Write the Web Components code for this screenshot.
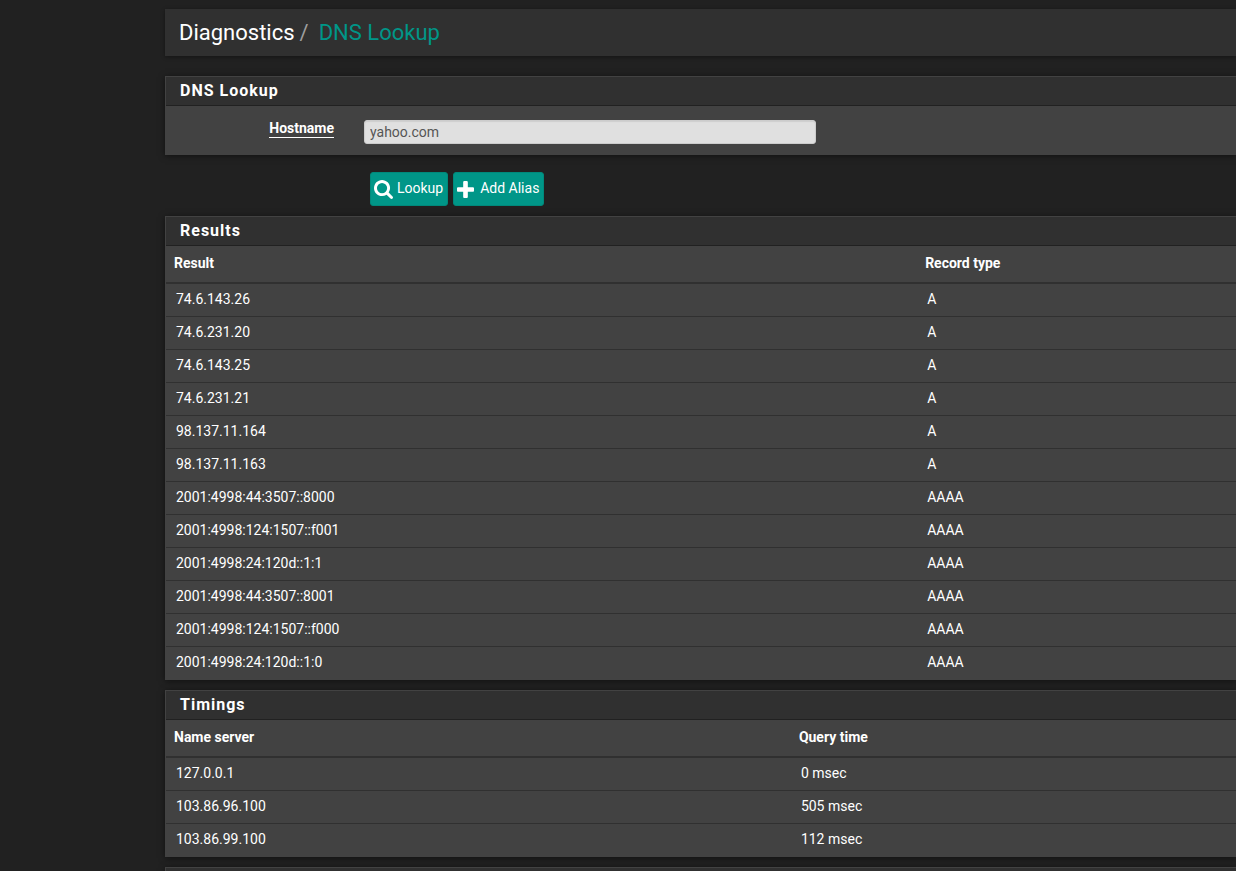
<!DOCTYPE html>
<html lang="en">
<head>
<meta charset="utf-8">
<meta name="viewport" content="width=device-width, initial-scale=1">
<title>Diagnostics: DNS Lookup</title>
<style>
  html { background: #212121; scrollbar-width: none; }
  body { margin: 0; font: 14px/20px Roboto, "Liberation Sans", sans-serif; color: #fff; }
</style>
</head>
<body>
<dns-lookup-page></dns-lookup-page>

<script>
const define = (name, html, setup) => {
  const template = document.createElement('template');
  template.innerHTML = html;
  customElements.define(name, class extends HTMLElement {
    connectedCallback() {
      if (this.shadowRoot) return;
      this.attachShadow({ mode: 'open' }).append(template.content.cloneNode(true));
      if (setup) setup(this, this.shadowRoot);
    }
  });
};

const ICONS = {
  search: ['0 0 1664 1664', 'M1152 704q0-185-131.5-316.5T704 256 387.5 387.5 256 704t131.5 316.5T704 1152t316.5-131.5T1152 704zm512 832q0 52-38 90t-90 38q-54 0-90-38l-343-342q-179 124-399 124-143 0-273.5-55.5T206 1202 55.5 977.5 0 704t55.5-273.5T206 206 430.5 55.5 704 0t273.5 55.5T1202 206t150.5 224.5T1408 704q0 220-124 399l343 343q37 37 37 90z'],
  plus: ['0 0 1408 1408', 'M1408 608v192q0 40-28 68t-68 28H896v416q0 40-28 68t-68 28H608q-40 0-68-28t-28-68V896H96q-40 0-68-28T0 800V608q0-40 28-68t68-28h416V96q0-40 28-68t68-28h192q40 0 68 28t28 68v416h416q40 0 68 28t28 68z']
};

define('bread-crumbs', `
  <style>
    :host { display: block; background: #303030; box-shadow: 0 1px 4px rgba(0,0,0,.4); }
    nav { display: flex; gap: 5px; padding: 10px 14px 9px; font-size: 22px; line-height: 28px; }
    .sep { color: #9e9e9e; }
    a { color: #009688; text-decoration: none; padding-left: 5px; }
  </style>
  <nav aria-label="Breadcrumb"><slot></slot><span class="sep">/</span><a href="#"></a></nav>`,
  (host, root) => { root.querySelector('a').textContent = host.getAttribute('current'); });

define('ui-panel', `
  <style>
    :host { display: block; background: #424242; border: 1px solid #424242; border-right: 0; box-shadow: 0 1px 6px rgba(0,0,0,.5); }
    h2 { margin: 0; padding: 0 14px; height: 28px; background: #303030; border-bottom: 1px solid #212121;
         font-size: 16px; line-height: 28px; font-weight: 700; letter-spacing: 1px; }
  </style>
  <h2></h2><slot></slot>`,
  (host, root) => { root.querySelector('h2').textContent = host.getAttribute('heading') || ''; });

define('host-form', `
  <style>
    :host { display: block; }
    form { display: grid; grid-template-columns: 168px minmax(0, 452px); column-gap: 30px; padding: 14px 15px 10px 0; }
    label { justify-self: end; align-self: start; font-size: 14px; line-height: 17px; font-weight: 700; border-bottom: 1px solid #fff; }
    input { box-sizing: border-box; width: 100%; height: 24px; padding: 0 5px; border: 1px solid #ccc; border-radius: 3px;
            background: #e0e0e0; color: #555; font: inherit; box-shadow: inset 0 1px 1px rgba(0,0,0,.08); }
  </style>
  <form><label for="host">Hostname</label><input id="host" type="text" value="yahoo.com"></form>`);

define('icon-button', `
  <style>
    :host { display: block; }
    button { display: flex; align-items: center; height: 34px; margin: 0; padding: 0 4px 0 3px; border: 1px solid #00897b;
             border-radius: 3px; background: #009688; color: #fff; font: inherit; cursor: pointer; gap: 4px; }
    svg { display: block; width: 19px; height: 19px; fill: currentColor; }
    span { padding-bottom: 2px; }
    :host([icon="plus"]) svg { width: 17px; height: 17px; }
    :host([icon="plus"]) button { gap: 6px; }
  </style>
  <button type="button"><svg aria-hidden="true"><path></path></svg><span><slot></slot></span></button>`,
  (host, root) => {
    const [box, d] = ICONS[host.getAttribute('icon')];
    root.querySelector('svg').setAttribute('viewBox', box);
    root.querySelector('path').setAttribute('d', d);
  });

const TABLES = {
  results: {
    head: ['Result', 'Record type'],
    rows: [['74.6.143.26', 'A'], ['74.6.231.20', 'A'], ['74.6.143.25', 'A'], ['74.6.231.21', 'A'],
      ['98.137.11.164', 'A'], ['98.137.11.163', 'A'],
      ['2001:4998:44:3507::8000', 'AAAA'], ['2001:4998:124:1507::f001', 'AAAA'], ['2001:4998:24:120d::1:1', 'AAAA'],
      ['2001:4998:44:3507::8001', 'AAAA'], ['2001:4998:124:1507::f000', 'AAAA'], ['2001:4998:24:120d::1:0', 'AAAA']]
  },
  timings: {
    head: ['Name server', 'Query time'],
    rows: [['127.0.0.1', '0 msec'], ['103.86.96.100', '505 msec'], ['103.86.99.100', '112 msec']]
  }
};

define('data-table', `
  <style>
    :host { display: block; --first: 70.2%; }
    :host([source="timings"]) { --first: 58.4%; }
    table { width: 100%; table-layout: fixed; border-collapse: separate; border-spacing: 0; }
    th, td { text-align: left; vertical-align: top; }
    th:first-child { width: var(--first); }
    th { box-sizing: border-box; height: 38px; padding: 7px 8px 9px; font-size: 14px; line-height: 20px; font-weight: 700; border-bottom: 2px solid #303030; }
    td { padding: 5px 10px 7px; border-top: 1px solid #303030; }
    tbody tr:first-child td { border-top: 0; }
  </style>
  <table><thead><tr></tr></thead><tbody></tbody></table>`,
  (host, root) => {
    const { head, rows } = TABLES[host.getAttribute('source')];
    const cell = (tag, text) => { const c = document.createElement(tag); c.textContent = text; return c; };
    root.querySelector('thead tr').append(...head.map(t => { const c = cell('th', t); c.scope = 'col'; return c; }));
    root.querySelector('tbody').append(...rows.map(r => {
      const tr = document.createElement('tr');
      tr.append(...r.map(t => cell('td', t)));
      return tr;
    }));
  });

define('dns-lookup-page', `
  <style>
    :host { display: block; overflow: hidden; }
    main { display: flex; flex-direction: column; gap: 10px; padding: 9px 0 0 165px; }
    bread-crumbs { margin-bottom: 10px; }
    .actions { display: flex; gap: 5px; padding: 7px 0 0 205px; }
  </style>
  <main>
    <bread-crumbs current="DNS Lookup">Diagnostics</bread-crumbs>
    <ui-panel heading="DNS Lookup"><host-form></host-form></ui-panel>
    <div class="actions">
      <icon-button icon="search">Lookup</icon-button>
      <icon-button icon="plus">Add Alias</icon-button>
    </div>
    <ui-panel heading="Results"><data-table source="results"></data-table></ui-panel>
    <ui-panel heading="Timings"><data-table source="timings"></data-table></ui-panel>
    <ui-panel></ui-panel>
  </main>`);
</script>
</body>
</html>
